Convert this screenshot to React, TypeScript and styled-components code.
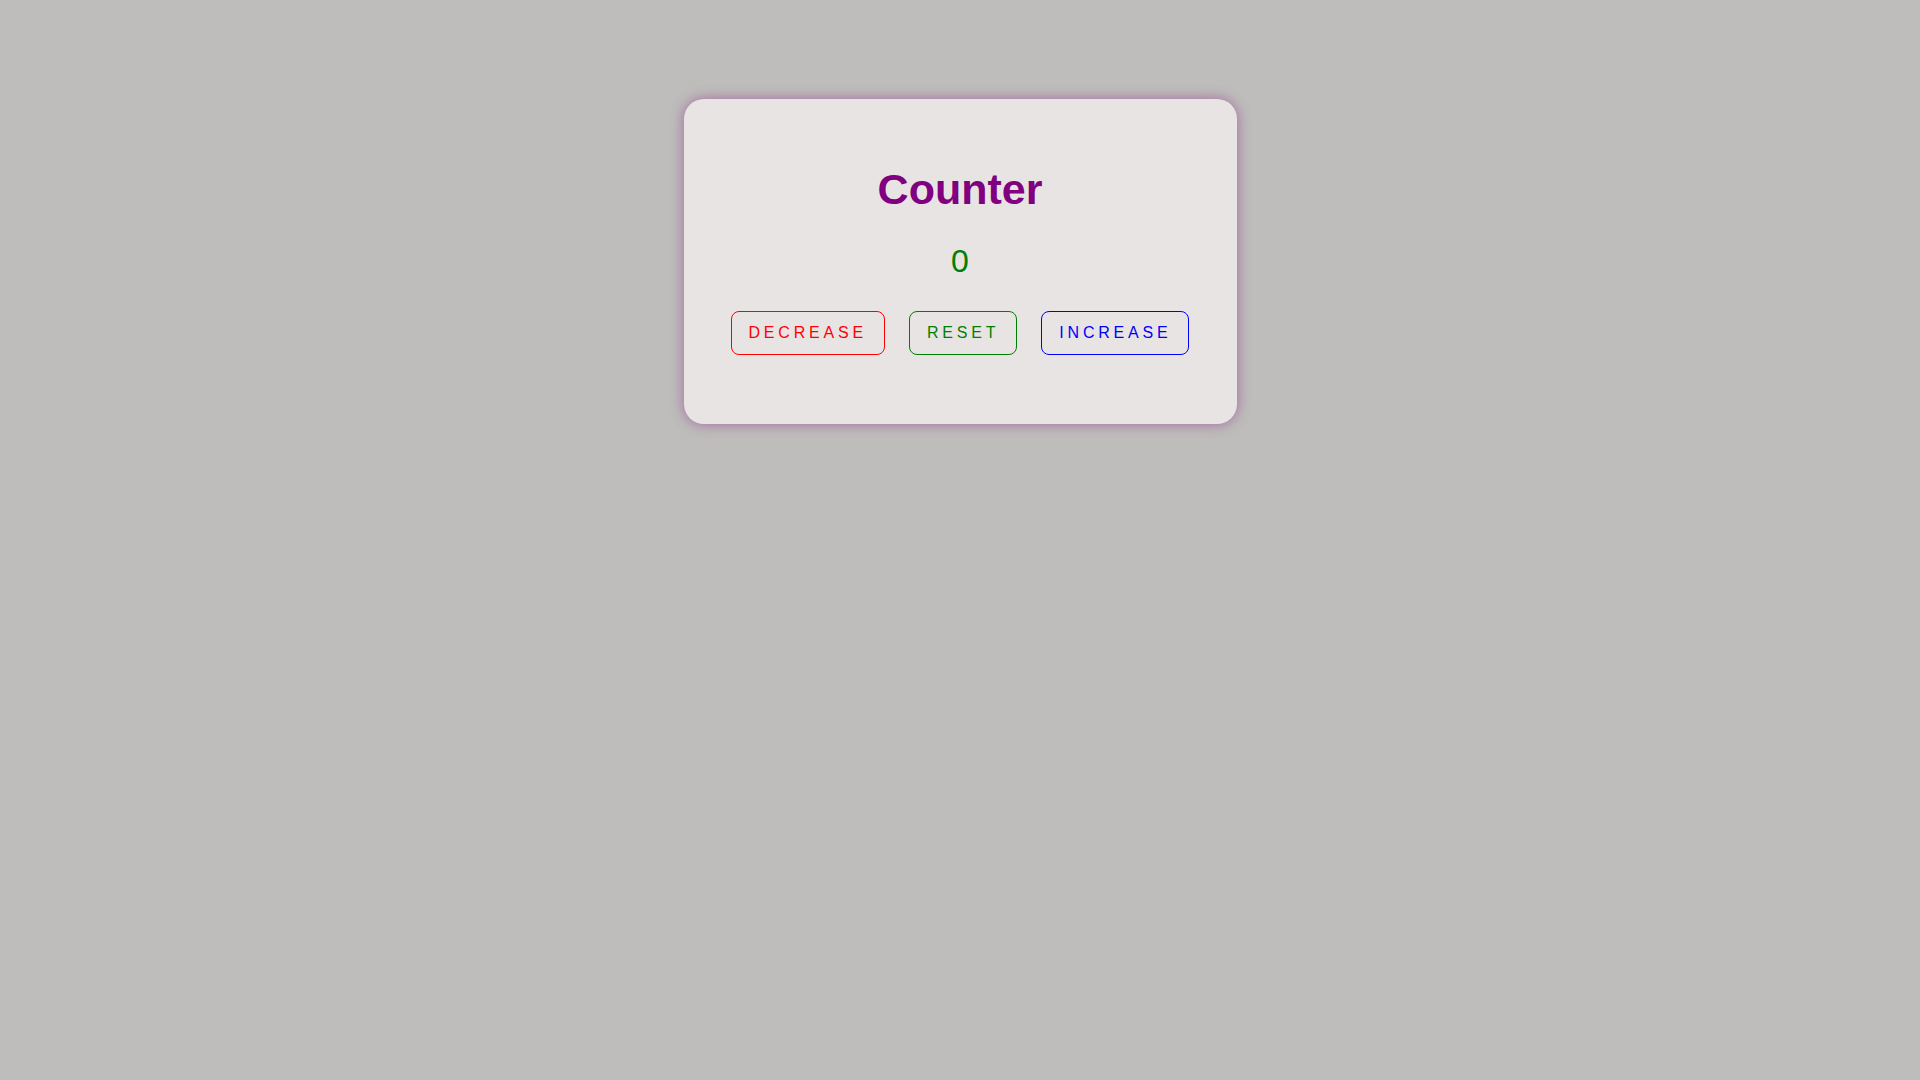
import React, { useState } from "react";
import styled, { createGlobalStyle } from "styled-components";

const GlobalStyle = createGlobalStyle`
  html, body {
    margin: 0;
    padding: 0;
    background: #bebdbb;
    font-family: "Liberation Sans", Arial, sans-serif;
  }
`;

const Page = styled.main`
  min-height: 100vh;
  display: flex;
  flex-direction: column;
  align-items: center;
  padding-top: 99px;
  box-sizing: border-box;
`;

const Card = styled.section`
  width: 553px;
  box-sizing: border-box;
  padding: 66px 0 69px;
  background: #e8e4e4;
  border-radius: 20px;
  box-shadow: 0 0 14px rgba(128, 0, 128, 0.45);
  display: flex;
  flex-direction: column;
  align-items: center;
`;

const Title = styled.h1`
  margin: 0 0 29px;
  font-size: 43px;
  font-weight: 700;
  color: #800080;
  line-height: normal;
`;

const Value = styled.div`
  margin: 0 0 31px;
  font-size: 32px;
  color: #008000;
  line-height: normal;
`;

const Row = styled.div`
  display: flex;
  gap: 24px;
  justify-content: center;
`;

const Button = styled.button<{ $color: string }>`
  font-family: "Liberation Sans", Arial, sans-serif;
  font-size: 16px;
  letter-spacing: 3.8px;
  line-height: normal;
  padding: 12px 17px;
  background: transparent;
  color: ${(p) => p.$color};
  border: 1px solid ${(p) => p.$color};
  border-radius: 8px;
  cursor: pointer;
`;

export default function App() {
  const [count, setCount] = useState(0);
  return (
    <>
      <GlobalStyle />
      <Page>
        <Card>
          <Title>Counter</Title>
          <Value>{count}</Value>
          <Row>
            <Button $color="#ff0000" onClick={() => setCount((c) => c - 1)}>
              DECREASE
            </Button>
            <Button $color="#008000" onClick={() => setCount(0)}>
              RESET
            </Button>
            <Button $color="#0000ff" onClick={() => setCount((c) => c + 1)}>
              INCREASE
            </Button>
          </Row>
        </Card>
      </Page>
    </>
  );
}
